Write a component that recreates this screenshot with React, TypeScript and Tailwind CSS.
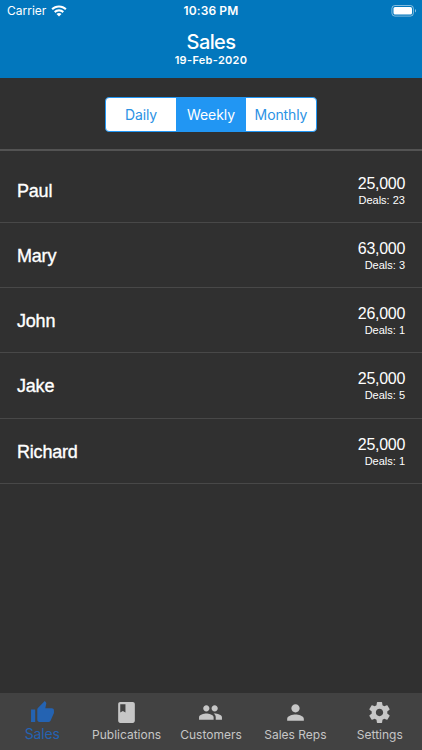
import React from "react";
import { MdBook, MdPerson, MdThumbUp } from "react-icons/md";

const reps = [
  { name: "Paul", total: "25,000", deals: 23 },
  { name: "Mary", total: "63,000", deals: 3 },
  { name: "John", total: "26,000", deals: 1 },
  { name: "Jake", total: "25,000", deals: 5 },
  { name: "Richard", total: "25,000", deals: 1 },
];

function PeopleIcon({ size }: { size: number }) {
  return (
    <svg width={size} height={size} viewBox="0 0 24 24" fill="currentColor">
      <path d="M16 11c1.66 0 2.99-1.34 2.99-3S17.66 5 16 5c-1.66 0-3 1.34-3 3s1.34 3 3 3zm-8 0c1.66 0 2.99-1.34 2.99-3S9.66 5 8 5C6.34 5 5 6.34 5 8s1.34 3 3 3zm0 2c-2.33 0-7 1.17-7 3.500V19h14v-2.500c0-2.330-4.670-3.500-7-3.500zm8 0c-.29 0-.62.02-.97.05 1.160.84 1.970 1.970 1.970 3.450V19h6v-2.500c0-2.330-4.670-3.500-7-3.500z" />
    </svg>
  );
}

function GearIcon({ size }: { size: number }) {
  return (
    <svg width={size} height={size} viewBox="0 0 24 24" fill="currentColor">
      <path d="M19.43 12.98c.04-.32.07-.64.07-.98s-.03-.66-.07-.98l2.11-1.65c.19-.15.24-.42.12-.64l-2-3.46c-.12-.22-.39-.3-.61-.22l-2.49 1c-.52-.4-1.08-.73-1.69-.98l-.38-2.65C14.46 2.18 14.25 2 14 2h-4c-.25 0-.46.18-.49.42l-.38 2.65c-.61.25-1.17.59-1.69.98l-2.49-1c-.23-.09-.49 0-.61.22l-2 3.46c-.13.22-.07.49.12.64l2.11 1.65c-.04.32-.07.65-.07.98s.03.66.07.98l-2.11 1.65c-.19.15-.24.42-.12.64l2 3.46c.12.22.39.3.61.22l2.49-1c.52.4 1.08.73 1.69.98l.38 2.65c.03.24.24.42.49.42h4c.25 0 .46-.18.49-.42l.38-2.65c.61-.25 1.17-.59 1.69-.98l2.49 1c.23.09.49 0 .61-.22l2-3.46c.12-.22.07-.49-.12-.64l-2.11-1.65zM12 15.5c-1.93 0-3.5-1.57-3.5-3.5s1.57-3.5 3.5-3.5 3.5 1.57 3.5 3.5-1.57 3.5-3.5 3.5z" />
    </svg>
  );
}

const tabs = [
  { label: "Publications", Icon: MdBook },
  { label: "Customers", Icon: PeopleIcon },
  { label: "Sales Reps", Icon: MdPerson },
  { label: "Settings", Icon: GearIcon },
];

function StatusBar() {
  return (
    <div className="grid h-[22px] grid-cols-3 items-center text-[12px] leading-[22px]">
      <div className="flex items-center gap-[5px] pl-[7px]">
        <span>Carrier</span>
        <svg width="16" height="12" viewBox="0 0 16 12" fill="white">
          <path d="M8 .4C5 .4 2.3 1.6.4 3.5l1.5 1.6C3.5 3.5 5.6 2.6 8 2.6s4.5.9 6.1 2.5l1.5-1.6C13.7 1.6 11 .4 8 .4Z" />
          <path d="M8 4.2c-1.900 0-3.700.8-5 2.100l1.500 1.600C5.400 6.900 6.600 6.400 8 6.400s2.600.5 3.500 1.500L13 6.300c-1.300-1.300-3.100-2.100-5-2.100Z" />
          <path d="M8 11.400 5.500 8.900c1.400-1.300 3.600-1.300 5 0Z" />
        </svg>
      </div>
      <span className="text-center font-semibold tracking-[0.1px]">10:36 PM</span>
      <div className="flex justify-end pr-[5px]">
        <svg width="26" height="12" viewBox="0 0 26 12">
          <rect x=".9" y=".5" width="21.5" height="10.6" rx="3" fill="none" stroke="white" strokeOpacity=".5" />
          <rect x="2.5" y="2.1" width="18.5" height="7.4" rx="1.5" fill="white" />
          <path d="M24 4v3.6c1.3-.7 1.3-2.9 0-3.6Z" fill="white" fillOpacity=".6" />
        </svg>
      </div>
    </div>
  );
}

export default function App() {
  return (
    <div className="flex h-[750px] w-[422px] flex-col overflow-hidden bg-[#303030] font-['Inter',sans-serif] text-white">
      <header className="h-[78px] shrink-0 bg-[#0277bd]">
        <StatusBar />
        <h1 className="mt-[7px] text-center text-[20px] leading-[26px] font-medium tracking-[-0.6px]">Sales</h1>
        <p className="text-center text-[11px] leading-[11px] font-semibold tracking-[0.3px]">19-Feb-2020</p>
      </header>

      <section className="flex h-[73px] shrink-0 justify-center border-b-2 border-[#535353] pt-[19px]">
        <div className="grid h-[35px] w-[212px] grid-cols-3 overflow-hidden rounded-[4px] border border-[#2196f3] bg-white text-center text-[14px] leading-[33px] tracking-[-0.1px] text-[#2b92e4]">
          <button>Daily</button>
          <button className="bg-[#2196f3] text-white">Weekly</button>
          <button>Monthly</button>
        </div>
      </section>

      <main className="flex-1 pt-[6.8px] font-['Liberation_Sans',Arial,sans-serif]">
        {reps.map((rep) => (
          <div key={rep.name} className="flex h-[65.2px] items-center justify-between border-b border-[#484848] px-[17px]">
            <span className="pt-[2px] text-[18px] leading-[22px] tracking-[-0.2px] [-webkit-text-stroke:0.35px_white]">{rep.name}</span>
            <div className="pt-[3px] text-right">
              <div className="text-[16px] leading-[18px] tracking-[-0.3px]">{rep.total}</div>
              <div className="text-[11px] leading-[15px]">Deals: {rep.deals}</div>
            </div>
          </div>
        ))}
      </main>

      <nav className="grid h-[57px] shrink-0 grid-cols-5 bg-[#424242] text-[#c6c6c6]">
        <div className="flex flex-col items-center pt-[7px] text-[#2463b2]">
          <MdThumbUp size={25} />
          <span className="text-[14px] leading-[17px] tracking-[-0.2px]">Sales</span>
        </div>
        {tabs.map(({ label, Icon }) => (
          <div key={label} className="flex flex-col items-center pt-[7px]">
            <Icon size={25} />
            <span className="text-[12px] leading-[19px] whitespace-nowrap">{label}</span>
          </div>
        ))}
      </nav>
    </div>
  );
}
